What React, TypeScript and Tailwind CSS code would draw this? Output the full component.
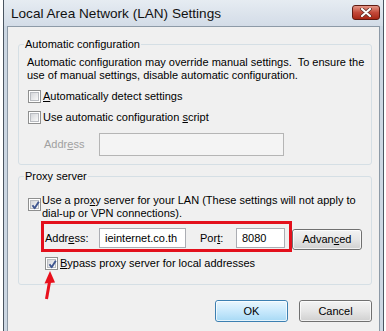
import React from 'react';

interface CheckboxProps {
  checked?: boolean;
  className?: string;
}

const Checkbox: React.FC<CheckboxProps> = ({ checked, className = '' }) => (
  <span className={`relative inline-flex w-[13px] h-[13px] shrink-0 border border-[#8e8f8f] bg-white p-[1px] ${className}`}>
    <span className="block w-full h-full border border-[#b9bcc1] bg-gradient-to-br from-[#d4d6da] to-[#f9f9f9]" />
    {checked && (
      <svg className="absolute inset-0" width="13" height="13" viewBox="0 0 13 13">
        <path d="M3.5 6.2 L5.6 9.2 L9.8 2.8" fill="none" stroke="#3f5690" strokeWidth="1.9" strokeLinejoin="round" />
      </svg>
    )}
  </span>
);

const VistaButton: React.FC<{ primary?: boolean; className?: string; children: React.ReactNode }> = ({
  primary,
  className = '',
  children,
}) => (
  <button
    className={`rounded-[3px] border p-0 text-[11px] leading-none ${
      primary
        ? 'border-[#3c7fb1] bg-gradient-to-b from-[#eaf6fd] via-[#c9e9fc] to-[#a7d9f5]'
        : 'border-[#707070] bg-gradient-to-b from-[#f3f3f3] via-[#e6e6e6] to-[#d0d0d0]'
    } ${className}`}
  >
    <span className="flex h-full w-full items-center justify-center rounded-[2px] border border-white/70">{children}</span>
  </button>
);

export default function App() {
  return (
    <div className="relative w-[386px] h-[331px] overflow-hidden bg-white font-['Liberation_Sans',Arial,sans-serif] text-[11px] text-black">
      <div className="ml-[3px] flex h-[331px] w-[381px] flex-col border-x border-[#4a5561] bg-[#ccd7e3]">
        {/* title bar */}
        <div className="flex h-[26px] items-start justify-between bg-gradient-to-b from-[#e6ecf2] to-[#d3dce7] pl-[7px] pr-[3px]">
          <span className="mt-[5px] text-[13.6px] leading-[17px] text-[#111]">Local Area Network (LAN) Settings</span>
          <div className="mt-[5px] flex h-[15px] w-[28px] items-center justify-center rounded-[3px] border border-[#5e1a12] bg-gradient-to-b from-[#e39586] via-[#c4493a] to-[#a82614]">
            <svg width="12" height="9" viewBox="0 0 12 9">
              <path d="M2 1 L10 8 M10 1 L2 8" stroke="#5a2a24" strokeWidth="3.6" strokeLinecap="round" />
              <path d="M2 1 L10 8 M10 1 L2 8" stroke="#ffffff" strokeWidth="2.2" strokeLinecap="round" />
            </svg>
          </div>
        </div>

        {/* dialog body */}
        <div className="mx-[3px] flex flex-1 flex-col border border-b-0 border-[#8d9aa7] bg-[#f0f0f0] pl-[10px] pr-[7px]">
          <fieldset className="mt-[11px] rounded-[3px] border border-[#d5dfe5] pb-[8px] pl-[8px] pr-[6px]">
            <legend className="-ml-[3px] px-[1px] leading-[13px]">Automatic configuration</legend>
            <p className="whitespace-pre pt-[5px] leading-[13px]">
              {'Automatic configuration may override manual settings.  To ensure the\nuse of manual settings, disable automatic configuration.'}
            </p>
            <label className="mt-[8px] flex h-[13px] items-center gap-[2px]">
              <Checkbox className="ml-[1px]" />
              <span>
                <u>A</u>utomatically detect settings
              </span>
            </label>
            <label className="mt-[8px] flex h-[13px] items-center gap-[2px]">
              <Checkbox className="ml-[1px]" />
              <span>
                Use automatic configuration <u>s</u>cript
              </span>
            </label>
            <div className="mt-[9px] flex items-center">
              <span className="ml-[17px] w-[55px] text-[#a0a0a0]">
                Addr<u>e</u>ss
              </span>
              <div className="h-[23px] w-[185px] border border-[#b5b5b5] bg-[#f4f4f4]" />
            </div>
          </fieldset>

          <fieldset className="mt-[5px] rounded-[3px] border border-[#d5dfe5] pb-[14px] pl-[8px] pr-[6px]">
            <legend className="-ml-[3px] px-[1px] leading-[13px]">Proxy server</legend>
            <div className="flex items-start gap-[1px] pt-[11px]">
              <Checkbox checked className="ml-[1px] mt-[4px]" />
              <p className="leading-[13px]">
                Use a pro<u>x</u>y server for your LAN (These settings will not apply to
                <br />
                dial-up or VPN connections).
              </p>
            </div>
            <div className="ml-[14px] mt-[1px] flex items-start">
              <div className="flex items-start border-[3px] border-[#e3101c] pb-[1px] pl-[1px] pr-[4px] pt-[4px]">
                <span className="w-[54px] leading-[20px]">
                  Addr<u>e</u>ss:
                </span>
                <div className="h-[20px] w-[87px] overflow-hidden whitespace-nowrap border border-[#abadb3] bg-white pl-[5px] leading-[18px]">
                  ieinternet.co.th
                </div>
                <span className="ml-[14px] w-[36px] leading-[20px]">
                  Por<u>t</u>:
                </span>
                <div className="h-[20px] w-[49px] border border-[#abadb3] bg-white pl-[5px] leading-[18px]">8080</div>
              </div>
              <VistaButton className="mt-[8px] h-[21px] w-[70px]">
                Advan<u>c</u>ed
              </VistaButton>
            </div>
            <label className="ml-[18px] mt-[5px] flex h-[13px] items-center gap-[2px]">
              <Checkbox checked />
              <span>
                <u>B</u>ypass proxy server for local addresses
              </span>
            </label>
          </fieldset>

          <div className="mt-[15px] flex justify-end gap-[11px]">
            <VistaButton primary className="h-[22px] w-[73px]">
              OK
            </VistaButton>
            <VistaButton className="h-[22px] w-[73px]">Cancel</VistaButton>
          </div>
        </div>
      </div>

      {/* red annotation arrow */}
      <svg className="absolute left-[40px] top-[266px]" width="20" height="36" viewBox="0 0 20 36">
        <path d="M10 5 L4.5 17.5 L15 16.5 Z" fill="#e8101c" />
        <path d="M9.5 16 L6.5 33" stroke="#e8101c" strokeWidth="3" />
      </svg>
    </div>
  );
}
